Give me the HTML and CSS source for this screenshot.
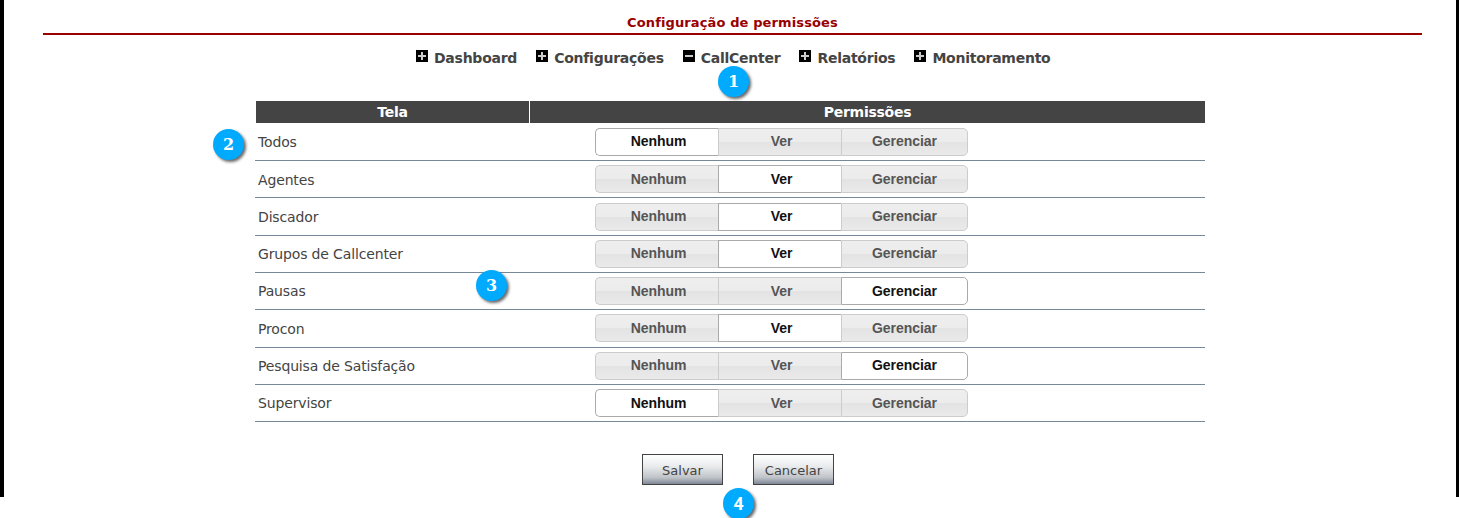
FILE: index.html
```
<!DOCTYPE html>
<html lang="pt-BR">
<head>
    <meta charset="UTF-8">
    <title>Configuração de permissões</title>
    <link rel="stylesheet" href="styles.css">
</head>
<body>
    <div class="page">
        <h1>Configuração de permissões</h1>

        <ul class="menu">
            <li><svg class="icon" viewBox="0 0 12 12"><rect width="12" height="12"/><path d="M2 6h8M6 2v8"/></svg><span>Dashboard</span></li>
            <li><svg class="icon" viewBox="0 0 12 12"><rect width="12" height="12"/><path d="M2 6h8M6 2v8"/></svg><span>Configurações</span></li>
            <li><svg class="icon" viewBox="0 0 12 12"><rect width="12" height="12"/><path d="M2 6h8"/></svg><span>CallCenter</span></li>
            <li><svg class="icon" viewBox="0 0 12 12"><rect width="12" height="12"/><path d="M2 6h8M6 2v8"/></svg><span>Relatórios</span></li>
            <li><svg class="icon" viewBox="0 0 12 12"><rect width="12" height="12"/><path d="M2 6h8M6 2v8"/></svg><span>Monitoramento</span></li>
        </ul>

        <div class="permissions">
            <div class="header">
                <div class="screen">Tela</div>
                <div class="options">Permissões</div>
            </div>
            <div class="row">
                <div class="name">Todos</div>
                <div class="switch"><button class="active">Nenhum</button><button>Ver</button><button>Gerenciar</button></div>
            </div>
            <div class="row">
                <div class="name">Agentes</div>
                <div class="switch"><button>Nenhum</button><button class="active">Ver</button><button>Gerenciar</button></div>
            </div>
            <div class="row">
                <div class="name">Discador</div>
                <div class="switch"><button>Nenhum</button><button class="active">Ver</button><button>Gerenciar</button></div>
            </div>
            <div class="row">
                <div class="name">Grupos de Callcenter</div>
                <div class="switch"><button>Nenhum</button><button class="active">Ver</button><button>Gerenciar</button></div>
            </div>
            <div class="row">
                <div class="name">Pausas</div>
                <div class="switch"><button>Nenhum</button><button>Ver</button><button class="active">Gerenciar</button></div>
            </div>
            <div class="row">
                <div class="name">Procon</div>
                <div class="switch"><button>Nenhum</button><button class="active">Ver</button><button>Gerenciar</button></div>
            </div>
            <div class="row">
                <div class="name">Pesquisa de Satisfação</div>
                <div class="switch"><button>Nenhum</button><button>Ver</button><button class="active">Gerenciar</button></div>
            </div>
            <div class="row">
                <div class="name">Supervisor</div>
                <div class="switch"><button class="active">Nenhum</button><button>Ver</button><button>Gerenciar</button></div>
            </div>
        </div>

        <div class="actions">
            <button>Salvar</button>
            <button>Cancelar</button>
        </div>
    </div>

    <!-- Numbered markers over the page -->
    <span class="marker marker-1">1</span>
    <span class="marker marker-2">2</span>
    <span class="marker marker-3">3</span>
    <span class="marker marker-4">4</span>
</body>
</html>
```
FILE: styles.css
```
* {
    box-sizing: border-box;
}
body {
    margin: 0;
    height: 518px;
    overflow: hidden;
    position: relative;
    background-color: #fff;
    color: #444;
    font-family: Verdana, "DejaVu Sans", sans-serif;
    font-size: 14px;
}
.page {
    height: 497px;
    border-left: 4px solid #000;
    border-right: 3px solid #000;
}
h1 {
    height: 35px;
    margin: 0 34px 0 39px;
    padding-top: 14px;
    border-bottom: 2px solid #900;
    color: #900;
    font-size: 13px;
    line-height: 17px;
    letter-spacing: 0.12px;
    text-align: center;
}
.menu {
    display: flex;
    gap: 19px;
    height: 66px;
    margin: 0;
    padding: 14px 0 0 412px;
    list-style: none;
    font-weight: bold;
    line-height: 18px;
    letter-spacing: -0.25px;
}
.menu li {
    display: flex;
    gap: 6px;
}
.icon {
    width: 12px;
    height: 12px;
    margin-top: 1px;
}
.icon path {
    stroke: #ccc;
    stroke-width: 2;
}
.permissions {
    width: 950px;
    margin-left: 251px;
}
.header {
    display: flex;
    height: 22.75px;
    padding-left: 1px;
    color: #fff;
    font-weight: bold;
    line-height: 23px;
    letter-spacing: -0.25px;
    text-align: center;
}
.header div {
    height: 22px;
    background-color: #444;
}
.screen {
    width: 273px;
    margin-right: 1px;
}
.options {
    flex: 1;
}
.row {
    display: flex;
    height: 37.3px;
    border-bottom: 1px solid #778899;
}
.name {
    width: 340px;
    padding: 9.5px 0 0 3px;
    line-height: 18px;
    letter-spacing: -0.15px;
}
.switch {
    display: flex;
    width: 373px;
    height: 28px;
    margin-top: 4.2px;
}
.switch button {
    width: 123px;
    padding: 0 0 1px 3px;
    border: 1px solid #ccc;
    border-right: none;
    background: linear-gradient(#eee 0, #ececec 50%, #e3e3e3 50%, #eaeaea 100%);
    color: #555;
    font: bold 14px "Liberation Sans", Arial, sans-serif;
    letter-spacing: -0.05px;
}
.switch button:first-child {
    border-radius: 5px 0 0 5px;
}
.switch button:last-child {
    width: 127px;
    padding-left: 0;
    border-right: 1px solid #ccc;
    border-radius: 0 5px 5px 0;
}
.switch .active,
.switch .active:last-child {
    border-color: #aaa;
    background: #fff;
    color: #111;
}
.actions {
    display: flex;
    gap: 30px;
    padding: 32px 0 0 638px;
}
.actions button {
    width: 81px;
    height: 31px;
    padding: 2px 0 0;
    border: 1px solid #444;
    background: linear-gradient(#fff 0, #e8eaec 40%, #bfc3c8 78%, #7e8896 100%);
    color: #444;
    font: 13px Verdana, "DejaVu Sans", sans-serif;
}
.marker {
    position: absolute;
    width: 31px;
    height: 31px;
    border-radius: 50%;
    background-color: #0af;
    box-shadow: 2px 2px 3px rgba(0, 0, 0, 0.6);
    color: #fff;
    font: bold 16px/31px "DejaVu Serif", serif;
    text-align: center;
}
.marker-1 {
    left: 718px;
    top: 66px;
}
.marker-2 {
    left: 213px;
    top: 129px;
}
.marker-3 {
    left: 476px;
    top: 270px;
}
.marker-4 {
    left: 723px;
    top: 488px;
    font-family: "Open Sans", sans-serif;
    font-size: 17px;
}
```
